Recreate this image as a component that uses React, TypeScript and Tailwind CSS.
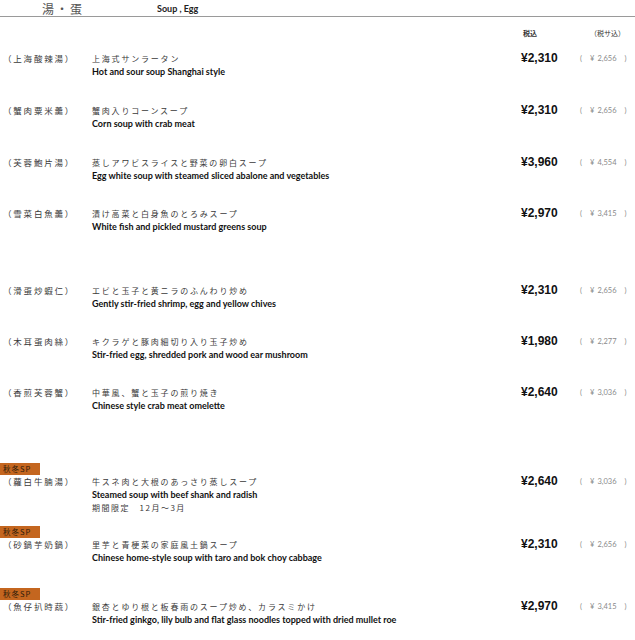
import React from "react";

type Item = {
  cn: string;
  jp: string;
  en: string;
  note?: string;
  price: string;
  sub: string;
  badge?: boolean;
  gap: string;
};

// メニュー行（gapは上の余白）
const items: Item[] = [
  { cn: "（上海酸辣湯）", jp: "上海式サンラータン", en: "Hot and sour soup Shanghai style", price: "¥2,310", sub: "2,656", gap: "mt-[12px]" },
  { cn: "（蟹肉粟米羹）", jp: "蟹肉入りコーンスープ", en: "Corn soup with crab meat", price: "¥2,310", sub: "2,656", gap: "mt-[26px]" },
  { cn: "（芙蓉鮑片湯）", jp: "蒸しアワビスライスと野菜の卵白スープ", en: "Egg white soup with steamed sliced abalone and vegetables", price: "¥3,960", sub: "4,554", gap: "mt-[26px]" },
  { cn: "（雪菜白魚羹）", jp: "漬け高菜と白身魚のとろみスープ", en: "White fish and pickled mustard greens soup", price: "¥2,970", sub: "3,415", gap: "mt-[25px]" },
  { cn: "（滑蛋炒蝦仁）", jp: "エビと玉子と黄ニラのふんわり炒め", en: "Gently stir-fried shrimp, egg and yellow chives", price: "¥2,310", sub: "2,656", gap: "mt-[51px]" },
  { cn: "（木耳蛋肉絲）", jp: "キクラゲと豚肉細切り入り玉子炒め", en: "Stir-fried egg, shredded pork and wood ear mushroom", price: "¥1,980", sub: "2,277", gap: "mt-[25px]" },
  { cn: "（香煎芙蓉蟹）", jp: "中華風、蟹と玉子の煎り焼き", en: "Chinese style crab meat omelette", price: "¥2,640", sub: "3,036", gap: "mt-[25px]" },
  { cn: "（蘿白牛腩湯）", jp: "牛スネ肉と大根のあっさり蒸しスープ", en: "Steamed soup with beef shank and radish", note: "期間限定　12月～3月", price: "¥2,640", sub: "3,036", badge: true, gap: "mt-[51px]" },
  { cn: "（砂鍋芋奶鍋）", jp: "里芋と青梗菜の家庭風土鍋スープ", en: "Chinese home-style soup with taro and bok choy cabbage", price: "¥2,310", sub: "2,656", badge: true, gap: "mt-[12px]" },
  { cn: "（魚仔扒時蔬）", jp: "銀杏とゆり根と板春雨のスープ炒め、カラスミかけ", en: "Stir-fried ginkgo, lily bulb and flat glass noodles topped with dried mullet roe", price: "¥2,970", sub: "3,415", badge: true, gap: "mt-[24px]" },
];

const cjk = "font-['Noto_Sans_CJK_JP','Noto_Sans_CJK_TC',serif]";

function MenuRow({ item }: { item: Item }) {
  return (
    <div className={item.gap}>
      {item.badge && (
        <div className={`w-[40px] h-[12px] bg-[#c4661f] text-[7.5px] leading-[12px] pl-[3px] tracking-[1px] text-[#2a1a0a] ${cjk}`}>
          秋冬SP
        </div>
      )}
      <div className="flex items-start">
        <div className={`w-[92px] pl-[3px] text-[8.5px] leading-[13px] tracking-[1.8px] text-[#3a3a3a] ${cjk}`}>
          {item.cn}
        </div>
        <div className="flex-1">
          <div className={`text-[8px] leading-[13px] tracking-[1.8px] text-[#3a3a3a] ${cjk}`}>{item.jp}</div>
          <div className="text-[9px] leading-[13px] font-bold text-[#111] font-['Lato',sans-serif]">{item.en}</div>
          {item.note && (
            <div className={`text-[8px] leading-[13px] tracking-[1.5px] text-[#3a3a3a] whitespace-pre ${cjk}`}>{item.note}</div>
          )}
        </div>
        <div className="w-[57px] text-[12px] leading-[13px] font-bold text-[#111] font-['Liberation_Sans',sans-serif]">
          {item.price}
        </div>
        <div className="w-[57px] flex text-[7.5px] leading-[13px] text-[#8a8a8a] font-['Lato',sans-serif]">
          <span className="ml-[2px]">(</span>
          <span className="ml-[8px]">¥</span>
          <span className="ml-[3px]">{item.sub}</span>
          <span className="ml-[8px]">)</span>
        </div>
      </div>
    </div>
  );
}

export default function App() {
  return (
    <div className="w-[635px] h-[640px] bg-white overflow-hidden">
      <div className="flex items-end h-[17px] border-b border-[#9a9a9a]">
        <span className={`ml-[42px] text-[12px] leading-[14px] tracking-[2px] text-[#555] ${cjk}`}>湯・蛋</span>
        <span className="ml-[73px] mb-[2px] text-[9px] leading-[10px] font-bold text-[#222] font-['Lato',sans-serif]">Soup , Egg</span>
      </div>
      <div className={`flex mt-[9px] h-[14px] text-[7px] leading-[14px] text-[#333] ${cjk}`}>
        <div className="flex-1" />
        <div className="w-[57px] font-bold pl-[2px]">税込</div>
        <div className="w-[57px] pl-[12px]">（税サ込）</div>
      </div>
      {items.map((it) => (
        <MenuRow key={it.cn} item={it} />
      ))}
    </div>
  );
}
